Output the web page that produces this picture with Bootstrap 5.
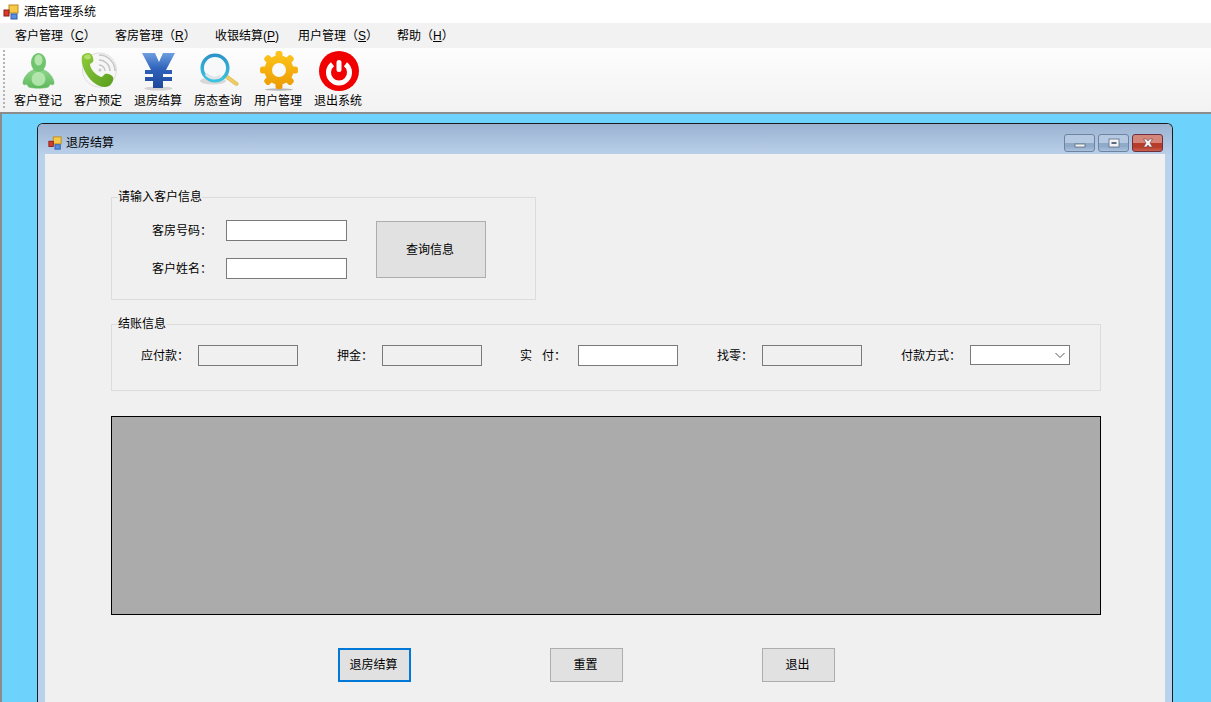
<!DOCTYPE html>
<html lang="zh-CN">

<head>
    <meta charset="UTF-8" />
    <meta name="viewport" content="width=device-width, initial-scale=1.0" />
    <title>酒店管理系统</title>
    <link rel="stylesheet" href="https://cdn.jsdelivr.net/npm/bootstrap@5.3.0/dist/css/bootstrap.min.css" />
    <style>
        html, body {
            height: 702px;
            overflow: hidden;
        }

        body {
            background: #6dd3fc;
            color: #000;
            font-family: "Liberation Sans", "Noto Sans CJK SC", sans-serif;
            font-size: 12px;
            line-height: 16px;
        }

        .app-title {
            height: 23px;
            background: #fff;
            padding-left: 3px;
            gap: 5px;
        }

        .app-menu {
            height: 25px;
            background: #f2f2f2;
            padding-left: 15px;
        }

        .app-menu span { flex: none; }
        .app-menu span:nth-child(1), .app-menu span:nth-child(2) { width: 100px; }
        .app-menu span:nth-child(3) { width: 83px; }
        .app-menu span:nth-child(4) { width: 99px; }

        .app-tools {
            height: 66px;
            background: linear-gradient(#fdfdfd, #f2f2f2);
            border-bottom: 2px solid #8c8c8c;
        }

        .tool-grip {
            width: 2px;
            height: 60px;
            margin: 2px 3px 0 3px;
            background: repeating-linear-gradient(#b4b4b4 0 2px, transparent 2px 4px);
        }

        .tool-item {
            width: 60px;
            flex: none;
            padding-top: 2px;
        }

        .tool-item svg {
            width: 42px;
            height: 42px;
            display: block;
        }

        .tool-item div {
            margin-top: 1px;
            white-space: nowrap;
        }

        .mdi-area {
            border-left: 2px solid #8c8c8c;
            height: 588px;
            padding: 9px 0 0 35px;
        }

        .mdi-win {
            width: 1136px;
            height: 600px;
            background: #b9d1ea;
            border: 1px solid #1b1b1b;
            border-bottom: 0;
            border-radius: 6px 6px 0 0;
            padding: 0 7px;
        }

        .mdi-head {
            height: 30px;
            margin: 0 -7px;
            padding: 7px 9px 0 10px;
            background: linear-gradient(#9bb3d1, #b9cfe9);
            border-radius: 5px 5px 0 0;
            gap: 4px;
        }

        .cap-btn {
            width: 31px;
            height: 18px;
            margin-left: 3px;
            padding: 0;
            border: 1px solid #6f83a0;
            border-radius: 3px;
            background: linear-gradient(#b5c9e2 0 50%, #8fa9c8 50% 70%, #a9c2de 100%);
        }

        .cap-close {
            border-color: #6d3040;
            background: linear-gradient(#d5867a 0 50%, #b83c2a 50% 75%, #c8604e 100%);
        }

        .cap-btn svg {
            display: block;
            margin: auto;
        }

        .mdi-body {
            height: 570px;
            background: #f0f0f0;
            padding: 36px 0 0 66px;
        }

        .grp {
            border: 1px solid #dcdcdc;
            margin: 0;
            min-width: 0;
        }

        .grp legend {
            float: none;
            width: auto;
            margin: 0 0 0 6px;
            padding: 0;
            font-size: 12px;
            line-height: 14px;
            height: 14px;
        }

        .grp-query {
            width: 425px;
            height: 110px;
            margin-top: 0;
        }

        .grp-pay {
            width: 990px;
            height: 74px;
            margin-top: 17px;
        }

        .query-fields {
            width: 231px;
            padding: 16px 0 0 40px;
        }

        .field-row {
            height: 21px;
            gap: 14px;
        }

        .field-row > span {
            flex: none;
            white-space: nowrap;
        }

        .field-row + .field-row {
            margin-top: 17px;
        }

        .win-input {
            display: block;
            border: 1px solid #7a7a7a;
            border-radius: 0;
            background: #fff;
            padding: 0;
            height: 21px;
            flex: none;
        }

        .win-input:focus { outline: 0; }
        .w-short { width: 121px; }
        .w-pay { width: 100px; }

        .win-input[readonly] { background: #f0f0f0; }

        .win-select {
            width: 100px;
            height: 20px;
            margin-bottom: 1px;
            padding: 0;
            position: relative;
        }

        .win-select svg {
            position: absolute;
            right: 4px;
            top: 6px;
        }

        .win-btn {
            background: #e1e1e1;
            border: 1px solid #adadad;
            border-radius: 0;
            color: #000;
            font-size: 12px;
            line-height: 16px;
            padding: 0 2px 0 0;
        }

        .btn-query {
            width: 110px;
            height: 57px;
            margin: 17px 0 0 33px;
        }

        .pay-row {
            padding: 14px 0 0 29px;
        }

        .pay-row > span { flex: none; white-space: nowrap; }
        .pay-row > span:nth-child(1) { width: 57px; }
        .pay-row > span:nth-child(3) { width: 45px; margin-left: 39px; }
        .pay-row > span:nth-child(5) { width: 58px; margin-left: 38px; }
        .pay-row > span:nth-child(7) { width: 45px; margin-left: 39px; }
        .pay-row > span:nth-child(9) { width: 69px; margin-left: 39px; }

        .data-box {
            width: 990px;
            height: 199px;
            margin-top: 25px;
            background: #ababab;
            border: 1px solid #000;
        }

        .foot-btns {
            margin: 33px 0 0 227px;
            gap: 139px;
        }

        .foot-btns .win-btn {
            width: 73px;
            height: 34px;
        }

        .foot-btns .win-btn.is-default {
            border: 2px solid #0078d7;
        }
    </style>
</head>

<body>
    <svg width="0" height="0" class="position-absolute">
        <defs>
            <symbol id="appIcon" viewBox="0 0 16 16">
                <rect x="6" y="1" width="9" height="8" fill="#f7c948" stroke="#b98a1e" />
                <rect x="1" y="6" width="5" height="6" fill="#d93a2b" stroke="#8a1c12" />
                <rect x="8" y="10" width="6" height="5" fill="#5b8fe0" stroke="#2f5aa8" />
            </symbol>
            <linearGradient id="gPerson" x1="0" y1="0" x2="0" y2="1">
                <stop offset="0" stop-color="#8ed589" />
                <stop offset="1" stop-color="#5cb95c" />
            </linearGradient>
            <linearGradient id="gYen" x1="0" y1="0" x2="0" y2="1">
                <stop offset="0" stop-color="#6e9fe0" />
                <stop offset=".45" stop-color="#2f62bb" />
                <stop offset="1" stop-color="#1f479c" />
            </linearGradient>
            <linearGradient id="gGear" x1="0" y1="0" x2="0" y2="1">
                <stop offset="0" stop-color="#ffc81e" />
                <stop offset="1" stop-color="#eb9800" />
            </linearGradient>
            <linearGradient id="gPhone" x1="0" y1="0" x2="1" y2="1">
                <stop offset="0" stop-color="#8fcb3c" />
                <stop offset="1" stop-color="#5a9e1e" />
            </linearGradient>
            <linearGradient id="gLens" x1="0" y1="0" x2="0" y2="1">
                <stop offset="0" stop-color="#2b95c9" />
                <stop offset="1" stop-color="#3cc3e0" />
            </linearGradient>
            <mask id="gearMask">
                <g fill="#fff">
                    <circle cx="22" cy="20" r="14.500" />
                    <rect x="18.500" y="1" width="7" height="38" rx="2.500" />
                    <rect x="18.500" y="1" width="7" height="38" rx="2.500" transform="rotate(45 22 20)" />
                    <rect x="18.500" y="1" width="7" height="38" rx="2.500" transform="rotate(90 22 20)" />
                    <rect x="18.500" y="1" width="7" height="38" rx="2.500" transform="rotate(135 22 20)" />
                </g>
                <circle cx="22" cy="20" r="7" fill="#000" />
            </mask>
        </defs>
    </svg>

    <!-- 主窗口标题 -->
    <div class="app-title d-flex align-items-center">
        <svg width="16" height="16"><use href="#appIcon" /></svg>
        <span>酒店管理系统</span>
    </div>

    <!-- 菜单 -->
    <div class="app-menu d-flex align-items-center">
        <span>客户管理（<u>C</u>）</span>
        <span>客房管理（<u>R</u>）</span>
        <span>收银结算(<u>P</u>)</span>
        <span>用户管理（<u>S</u>）</span>
        <span>帮助（<u>H</u>）</span>
    </div>

    <!-- 工具栏 -->
    <div class="app-tools d-flex">
        <div class="tool-grip"></div>
        <div class="tool-item d-flex flex-column align-items-center">
            <svg viewBox="0 0 42 42">
                <path d="M16 20c-5 2-9 7-10 12-.5 3 2 3.500 4 2 .5 2 1 3 3 3.500 5 1 12 1 17 0 2-.5 2.500-1.500 3-3.500 2 1.500 4.500 1 4-2-1-5-5-10-10-12z" fill="url(#gPerson)" stroke="#66b866" stroke-width=".5" />
                <ellipse cx="21.500" cy="12.500" rx="7.500" ry="9.500" fill="#6fc46e" />
                <ellipse cx="21.500" cy="10" rx="4" ry="5.500" fill="#b4e6ac" />
                <ellipse cx="21.500" cy="29" rx="7" ry="7" fill="#c4edbd" opacity=".75" />
            </svg>
            <div>客户登记</div>
        </div>
        <div class="tool-item d-flex flex-column align-items-center">
            <svg viewBox="0 0 42 42">
                <circle cx="22.500" cy="20" r="17" fill="#f6f6f6" stroke="#dedede" />
                <g fill="none" stroke="#c6c6c6" stroke-width="1.500">
                    <path d="M22 15a6 6 0 0 1 6 6" />
                    <path d="M22 10a11 11 0 0 1 11 11" />
                    <path d="M22 5a16 16 0 0 1 16 16" />
                </g>
                <circle cx="23" cy="20" r="1.500" fill="#c6c6c6" />
                <path d="M5 6c2-3 7-4 9-2 2 2 3 6 2 8-1 1-3 1-3 3 1 5 6 10 11 12 2 0 2-2 4-3 2-1 7 1 8 3 1 3-1 7-4 9-4 2-10 1-16-4C9 26 3 14 5 6z" fill="url(#gPhone)" />
                <path d="M7 6c2-1 5-2 6-1 1 2 1 3 0 4-3 1-6 0-6-3z" fill="#b4de6b" />
            </svg>
            <div>客户预定</div>
        </div>
        <div class="tool-item d-flex flex-column align-items-center">
            <svg viewBox="0 0 42 42">
                <ellipse cx="21.500" cy="38.500" rx="14" ry="2" fill="#d4d4d4" />
                <path d="M5 3h13l4 9 4-9h12l-9 17h6v4h-9v3h9v4h-9v7H16v-7H8v-4h8v-3H8v-4h6z" fill="url(#gYen)" />
            </svg>
            <div>退房结算</div>
        </div>
        <div class="tool-item d-flex flex-column align-items-center">
            <svg viewBox="0 0 42 42">
                <ellipse cx="16" cy="31" rx="13" ry="3.500" fill="#d8d8d8" />
                <path d="M27 27l2-3 12 9c1 2-1 3-3 2z" fill="#f0cd62" stroke="#c9a23a" stroke-width=".5" />
                <circle cx="18" cy="18" r="12.800" fill="#f6f8fa" stroke="url(#gLens)" stroke-width="3.500" />
                <path d="M9 24a11 11 0 0 0 15 2" fill="none" stroke="#dfe4e8" stroke-width="3" />
            </svg>
            <div>房态查询</div>
        </div>
        <div class="tool-item d-flex flex-column align-items-center">
            <svg viewBox="0 0 42 42">
                <ellipse cx="22" cy="39.500" rx="14" ry="1.200" fill="#b5b5b5" />
                <rect x="0" y="0" width="42" height="40" fill="url(#gGear)" mask="url(#gearMask)" />
            </svg>
            <div>用户管理</div>
        </div>
        <div class="tool-item d-flex flex-column align-items-center">
            <svg viewBox="0 0 42 42">
                <circle cx="22" cy="21" r="20" fill="#f00000" />
                <path d="M15.500 14.300a10.500 10.500 0 1 0 13 0" fill="none" stroke="#fff" stroke-width="5" />
                <rect x="19.500" y="10" width="5" height="12" rx="2.500" fill="#fff" />
            </svg>
            <div>退出系统</div>
        </div>
    </div>

    <!-- MDI 区域 -->
    <div class="mdi-area">
        <div class="mdi-win">
            <div class="mdi-head d-flex align-items-center">
                <svg width="14" height="14"><use href="#appIcon" /></svg>
                <span>退房结算</span>
                <div class="ms-auto d-flex">
                    <button class="cap-btn" type="button" aria-label="最小化">
                        <svg width="12" height="10"><rect x="1" y="6" width="10" height="3" fill="#f2f2f2" stroke="#5a6a80" stroke-width=".8" /></svg>
                    </button>
                    <button class="cap-btn" type="button" aria-label="还原">
                        <svg width="12" height="10"><rect x="1" y="1" width="10" height="8" fill="#f2f2f2" stroke="#5a6a80" stroke-width=".8" /><rect x="3.500" y="4" width="5" height="2" fill="#5a6a80" /></svg>
                    </button>
                    <button class="cap-btn cap-close" type="button" aria-label="关闭">
                        <svg width="12" height="10"><path d="M1.500 1h3L6 3l1.500-2h3L8 5l2.500 4h-3L6 7 4.500 9h-3L4 5z" fill="#f4f4f4" stroke="#6b3a40" stroke-width=".6" /></svg>
                    </button>
                </div>
            </div>

            <div class="mdi-body">
                <fieldset class="grp grp-query">
                    <legend>请输入客户信息</legend>
                    <div class="d-flex">
                        <div class="query-fields">
                            <div class="field-row d-flex align-items-center">
                                <span>客房号码：</span>
                                <input class="win-input w-short" type="text" />
                            </div>
                            <div class="field-row d-flex align-items-center">
                                <span>客户姓名：</span>
                                <input class="win-input w-short" type="text" />
                            </div>
                        </div>
                        <button class="win-btn btn-query" type="button">查询信息</button>
                    </div>
                </fieldset>

                <fieldset class="grp grp-pay">
                    <legend>结账信息</legend>
                    <div class="pay-row d-flex align-items-center">
                        <span>应付款：</span>
                        <input class="win-input w-pay" type="text" readonly />
                        <span>押金：</span>
                        <input class="win-input w-pay" type="text" readonly />
                        <span>实&nbsp;&nbsp;&nbsp;付：</span>
                        <input class="win-input w-pay" type="text" />
                        <span>找零：</span>
                        <input class="win-input w-pay" type="text" readonly />
                        <span>付款方式：</span>
                        <div class="win-input win-select">
                            <svg width="10" height="7"><path d="M.5 1l4.500 4.500L9.500 1" fill="none" stroke="#555" /></svg>
                        </div>
                    </div>
                </fieldset>

                <div class="data-box"></div>

                <div class="foot-btns d-flex">
                    <button class="win-btn is-default" type="button">退房结算</button>
                    <button class="win-btn" type="button">重置</button>
                    <button class="win-btn" type="button">退出</button>
                </div>
            </div>
        </div>
    </div>

    <script src="https://cdn.jsdelivr.net/npm/bootstrap@5.3.0/dist/js/bootstrap.bundle.min.js"></script>
</body>

</html>
